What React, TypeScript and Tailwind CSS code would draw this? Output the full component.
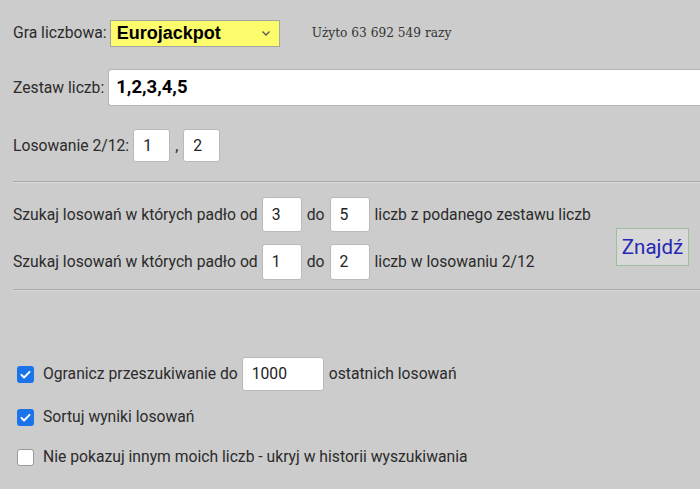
import { useState } from "react";

const Check = ({ checked }: { checked: boolean }) => {
  if (!checked)
    return (
      <span className="ml-[4px] mr-[9px] inline-block h-[17px] w-[17px] rounded-[3px] border border-[#9a9a9a] bg-white" />
    );
  return (
    <span className="ml-[4px] mr-[9px] flex h-[17px] w-[17px] items-center justify-center rounded-[3px] bg-[#1a73e8]">
      <svg width="13" height="13" viewBox="0 0 16 16" fill="none">
        <path d="M3 8.5l3.2 3.2L13 4.8" stroke="white" strokeWidth="2.4" strokeLinecap="round" strokeLinejoin="round" />
      </svg>
    </span>
  );
};

const NumBox = ({ value, w = "w-[40px]", h = "h-[35px]" }: { value: string; w?: string; h?: string }) => (
  <div className={`${w} ${h} flex items-center rounded-[3px] border border-[#b9b9b9] bg-white pl-[9px] text-[15.7px] text-[#222]`}>
    {value}
  </div>
);

const Divider = ({ className }: { className: string }) => (
  <div className={`${className} ml-[13px] border-t border-b border-t-[#a9a9a9] border-b-[#dadada]`} />
);

export default function App() {
  const [opts] = useState({ limit: true, sort: true, hide: false });

  return (
    <div className="h-[489px] w-[700px] overflow-hidden bg-[#cccccc] pt-[20px] text-[15.7px] text-[#2b2b2b] [font-family:Roboto,'Noto_Sans',sans-serif]">
      {/* Gra liczbowa */}
      <div className="flex h-[26px] items-center pl-[13px]">
        <span>Gra liczbowa:</span>
        <div className="ml-[3px] flex h-[27px] w-[170px] items-center justify-between border border-[#a5a5a5] bg-[#fbfb6c] pl-[6px] pr-[8px]">
          <span className="text-[18px] font-bold text-black [font-family:'Liberation_Sans',Arial,sans-serif]">Eurojackpot</span>
          <svg width="10" height="7" viewBox="0 0 10 7" fill="none">
            <path d="M1.5 1.5L5 5l3.5-3.5" stroke="#555" strokeWidth="1.3" />
          </svg>
        </div>
        <span className="ml-[32px] text-[12.2px] text-[#333] [font-family:'DejaVu_Serif',serif]">
          Użyto 63 692 549 razy
        </span>
      </div>

      {/* Zestaw liczb */}
      <div className="mt-[23px] flex h-[37px] items-center pl-[13px]">
        <span>Zestaw liczb:</span>
        <div className="ml-[4px] flex h-[37px] flex-1 items-center rounded-l-[3px] border border-r-0 border-[#b5b5b5] bg-white pl-[7px] text-[18.5px] font-bold text-black">
          1,2,3,4,5
        </div>
      </div>

      {/* Losowanie 2/12 */}
      <div className="mt-[23px] flex h-[33px] items-center pl-[13px]">
        <span>Losowanie 2/12:</span>
        <div className="ml-[4px]">
          <NumBox value="1" w="w-[37px]" h="h-[33px]" />
        </div>
        <span className="mx-[5px]">,</span>
        <NumBox value="2" w="w-[37px]" h="h-[33px]" />
      </div>

      <Divider className="mt-[19px]" />

      {/* Szukaj */}
      <div className="flex pr-[11px]">
        <div className="flex-1">
          <div className="mt-[14px] flex h-[35px] items-center pl-[13px]">
            <span>Szukaj losowań w których padło od</span>
            <div className="ml-[4px]"><NumBox value="3" /></div>
            <span className="mx-[5px]">do</span>
            <NumBox value="5" />
            <span className="ml-[5px]">liczb z podanego zestawu liczb</span>
          </div>
          <div className="mt-[12px] flex h-[36px] items-center pl-[13px]">
            <span>Szukaj losowań w których padło od</span>
            <div className="ml-[4px]"><NumBox value="1" h="h-[36px]" /></div>
            <span className="mx-[5px]">do</span>
            <NumBox value="2" h="h-[36px]" />
            <span className="ml-[5px]">liczb w losowaniu 2/12</span>
          </div>
        </div>
        <button className="mt-[45px] flex h-[38px] w-[73px] items-center justify-center border border-[#9dbf9d] bg-[#d8d8d8] text-[20.5px] text-[#2727b3]">
          Znajdź
        </button>
      </div>

      <Divider className="mt-[9px]" />

      {/* Opcje */}
      <div className="mt-[66px] flex h-[34px] items-center pl-[13px]">
        <Check checked={opts.limit} />
        <span>Ogranicz przeszukiwanie do</span>
        <div className="ml-[4px]"><NumBox value="1000" w="w-[82px]" h="h-[34px]" /></div>
        <span className="ml-[5px]">ostatnich losowań</span>
      </div>
      <div className="mt-[14px] flex h-[24px] items-center pl-[13px]">
        <Check checked={opts.sort} />
        <span>Sortuj wyniki losowań</span>
      </div>
      <div className="mt-[16px] flex h-[24px] items-center pl-[13px]">
        <Check checked={opts.hide} />
        <span>Nie pokazuj innym moich liczb - ukryj w historii wyszukiwania</span>
      </div>
    </div>
  );
}
